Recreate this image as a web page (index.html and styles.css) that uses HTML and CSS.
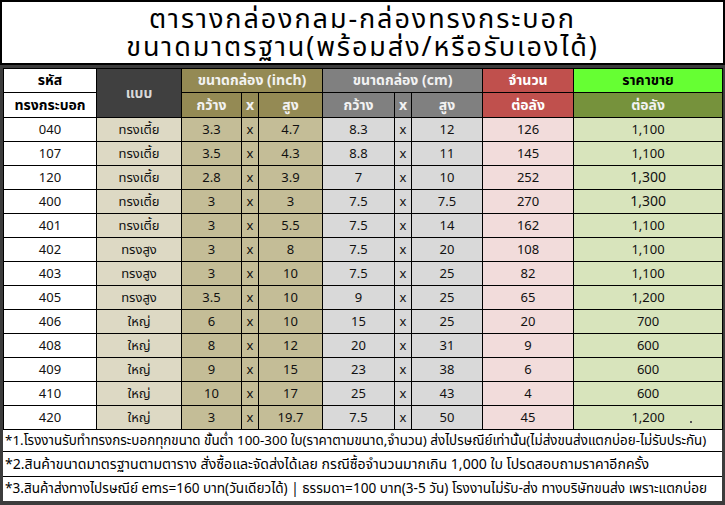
FILE: index.html
```html
<!DOCTYPE html>
<html lang="th">
<head>
<meta charset="utf-8">
<link rel="stylesheet" href="styles.css">
</head>
<body>
<div class="sheet">
  <div class="title">
    <div class="title-line">ตารางกล่องกลม-กล่องทรงกระบอก</div>
    <div class="title-line">ขนาดมาตรฐาน(พร้อมส่ง/หรือรับเองได้)</div>
  </div>
  <div class="frame">
    <table class="grid">
      <colgroup>
        <col class="c-code"><col class="c-type"><col class="c-iw"><col class="c-x"><col class="c-ih"><col class="c-cw"><col class="c-x"><col class="c-ch"><col class="c-qty"><col class="c-price">
      </colgroup>
      <thead>
        <tr>
          <th class="h-code">รหัส</th>
          <th class="h-type" rowspan="2">แบบ</th>
          <th class="h-inch" colspan="3">ขนาดกล่อง (inch)</th>
          <th class="h-cm" colspan="3">ขนาดกล่อง (cm)</th>
          <th class="h-qty">จำนวน</th>
          <th class="h-price">ราคาขาย</th>
        </tr>
        <tr>
          <th class="h-code">ทรงกระบอก</th>
          <th class="h-inch">กว้าง</th>
          <th class="h-inch">x</th>
          <th class="h-inch">สูง</th>
          <th class="h-cm">กว้าง</th>
          <th class="h-cm">x</th>
          <th class="h-cm">สูง</th>
          <th class="h-qty">ต่อลัง</th>
          <th class="h-price2">ต่อลัง</th>
        </tr>
      </thead>
      <tbody>
        <tr><td class="d-code">040</td><td class="d-type">ทรงเตี้ย</td><td class="d-inch">3.3</td><td class="d-inch">x</td><td class="d-inch">4.7</td><td class="d-cm">8.3</td><td class="d-cm">x</td><td class="d-cm">12</td><td class="d-qty">126</td><td class="d-price">1,100</td></tr>
        <tr><td class="d-code">107</td><td class="d-type">ทรงเตี้ย</td><td class="d-inch">3.5</td><td class="d-inch">x</td><td class="d-inch">4.3</td><td class="d-cm">8.8</td><td class="d-cm">x</td><td class="d-cm">11</td><td class="d-qty">145</td><td class="d-price">1,100</td></tr>
        <tr><td class="d-code">120</td><td class="d-type">ทรงเตี้ย</td><td class="d-inch">2.8</td><td class="d-inch">x</td><td class="d-inch">3.9</td><td class="d-cm">7</td><td class="d-cm">x</td><td class="d-cm">10</td><td class="d-qty">252</td><td class="d-price big">1,300</td></tr>
        <tr><td class="d-code">400</td><td class="d-type">ทรงเตี้ย</td><td class="d-inch">3</td><td class="d-inch">x</td><td class="d-inch">3</td><td class="d-cm">7.5</td><td class="d-cm">x</td><td class="d-cm">7.5</td><td class="d-qty">270</td><td class="d-price big">1,300</td></tr>
        <tr><td class="d-code">401</td><td class="d-type">ทรงเตี้ย</td><td class="d-inch">3</td><td class="d-inch">x</td><td class="d-inch">5.5</td><td class="d-cm">7.5</td><td class="d-cm">x</td><td class="d-cm">14</td><td class="d-qty">162</td><td class="d-price">1,100</td></tr>
        <tr><td class="d-code">402</td><td class="d-type">ทรงสูง</td><td class="d-inch">3</td><td class="d-inch">x</td><td class="d-inch">8</td><td class="d-cm">7.5</td><td class="d-cm">x</td><td class="d-cm">20</td><td class="d-qty">108</td><td class="d-price">1,100</td></tr>
        <tr><td class="d-code">403</td><td class="d-type">ทรงสูง</td><td class="d-inch">3</td><td class="d-inch">x</td><td class="d-inch">10</td><td class="d-cm">7.5</td><td class="d-cm">x</td><td class="d-cm">25</td><td class="d-qty">82</td><td class="d-price">1,100</td></tr>
        <tr><td class="d-code">405</td><td class="d-type">ทรงสูง</td><td class="d-inch">3.5</td><td class="d-inch">x</td><td class="d-inch">10</td><td class="d-cm">9</td><td class="d-cm">x</td><td class="d-cm">25</td><td class="d-qty">65</td><td class="d-price">1,200</td></tr>
        <tr><td class="d-code">406</td><td class="d-type">ใหญ่</td><td class="d-inch">6</td><td class="d-inch">x</td><td class="d-inch">10</td><td class="d-cm">15</td><td class="d-cm">x</td><td class="d-cm">25</td><td class="d-qty">20</td><td class="d-price">700</td></tr>
        <tr><td class="d-code">408</td><td class="d-type">ใหญ่</td><td class="d-inch">8</td><td class="d-inch">x</td><td class="d-inch">12</td><td class="d-cm">20</td><td class="d-cm">x</td><td class="d-cm">31</td><td class="d-qty">9</td><td class="d-price">600</td></tr>
        <tr><td class="d-code">409</td><td class="d-type">ใหญ่</td><td class="d-inch">9</td><td class="d-inch">x</td><td class="d-inch">15</td><td class="d-cm">23</td><td class="d-cm">x</td><td class="d-cm">38</td><td class="d-qty">6</td><td class="d-price">600</td></tr>
        <tr><td class="d-code">410</td><td class="d-type">ใหญ่</td><td class="d-inch">10</td><td class="d-inch">x</td><td class="d-inch">17</td><td class="d-cm">25</td><td class="d-cm">x</td><td class="d-cm">43</td><td class="d-qty">4</td><td class="d-price">600</td></tr>
        <tr><td class="d-code">420</td><td class="d-type">ใหญ่</td><td class="d-inch">3</td><td class="d-inch">x</td><td class="d-inch">19.7</td><td class="d-cm">7.5</td><td class="d-cm">x</td><td class="d-cm">50</td><td class="d-qty">45</td><td class="d-price">1,200<span class="dot"></span></td></tr>
      </tbody>
    </table>
    <div class="notes">
      <div class="note n1">*1.โรงงานรับทำทรงกระบอกทุกขนาด ขั้นต่ำ 100-300 ใบ(ราคาตามขนาด,จำนวน) ส่งไปรษณีย์เท่านั้น(ไม่ส่งขนส่งแตกบ่อย-ไม่รับประกัน)</div>
      <div class="note n2">*2.สินค้าขนาดมาตรฐานตามตาราง สั่งซื้อและจัดส่งได้เลย กรณีซื้อจำนวนมากเกิน 1,000 ใบ โปรดสอบถามราคาอีกครั้ง</div>
      <div class="note n3">*3.สินค้าส่งทางไปรษณีย์ ems=160 บาท(วันเดียวได้) | ธรรมดา=100 บาท(3-5 วัน) โรงงานไม่รับ-ส่ง ทางบริษัทขนส่ง เพราะแตกบ่อย</div>
    </div>
  </div>
</div>
</body>
</html>
```

FILE: styles.css
```css
html, body {
  margin: 0;
  padding: 0;
  background: #ffffff;
}

body {
  font-family: Tahoma, "Noto Sans Thai", "Noto Sans", "DejaVu Sans", sans-serif;
  color: #000;
}

.sheet {
  width: 725px;
  height: 505px;
  overflow: hidden;
  background: #3c3c3c;
}

.title {
  box-sizing: border-box;
  height: 65px;
  width: 725px;
  background: #fff;
  border: 2px solid #000;
  display: flex;
  flex-direction: column;
  align-items: center;
  justify-content: flex-start;
  padding-top: 4px;
}

.title-line {
  font-size: 27px;
  line-height: 28px;
  letter-spacing: 1.9px;
  color: #000;
  white-space: nowrap;
}

.frame {
  box-sizing: border-box;
  width: 725px;
  border-top: 3px solid #3c3c3c;
  border-left: 3px solid #3c3c3c;
  border-right: 3px solid #3c3c3c;
  border-bottom: 5px solid #3c3c3c;
  background: #fff;
}

.grid {
  border-collapse: collapse;
  table-layout: fixed;
  width: 719px;
}

.c-code { width: 93px; }
.c-type { width: 85px; }
.c-iw { width: 60px; }
.c-x { width: 17px; }
.c-ih { width: 64px; }
.c-cw { width: 72px; }
.c-ch { width: 71px; }
.c-qty { width: 91px; }
.c-price { width: 149px; }

.grid th,
.grid td {
  border: 1px solid #000;
  padding: 0;
  text-align: center;
  vertical-align: middle;
  white-space: nowrap;
  overflow: hidden;
}

.grid thead tr { height: 24px; }
.grid thead tr:last-child th { height: 24px; }

.grid th {
  font-size: 14px;
  font-weight: bold;
}

.grid tbody tr { height: 24px; }

.grid td {
  font-size: 13px;
  color: #111;
}

.h-code { background: #fff; color: #000; }
.h-type { background: #404040; color: #d9d9d9; }
.h-inch { background: #948a54; color: #f2f2f2; }
.h-cm { background: #808080; color: #f2f2f2; }
.h-qty { background: #c0504d; color: #fff; }
.h-price { background: #66ff33; color: #000; }
.h-price2 { background: #76923c; color: #f2f2f2; }

.d-code { background: #fff; }
.d-type { background: #ddd9c4; }
.d-inch { background: #c4bd97; }
.d-cm { background: #d9d9d9; }
.d-qty { background: #f2dcdb; }
.d-price { background: #d8e4bc; position: relative; }
.d-price.big { font-size: 14px; }

.dot {
  position: absolute;
  left: 116px;
  top: 15px;
  width: 2px;
  height: 2px;
  background: #555;
}

.notes {
  display: flex;
  flex-direction: column;
}

.note {
  box-sizing: border-box;
  color: #000;
  padding-left: 2px;
  white-space: nowrap;
  overflow: hidden;
  display: flex;
  align-items: center;
  border-bottom: 1px solid #000;
}

.n1 { height: 22px; font-size: 13.4px; }
.n2 { height: 25px; font-size: 14.1px; }
.n3 { height: 24px; font-size: 13.6px; border-bottom: none; }
```
